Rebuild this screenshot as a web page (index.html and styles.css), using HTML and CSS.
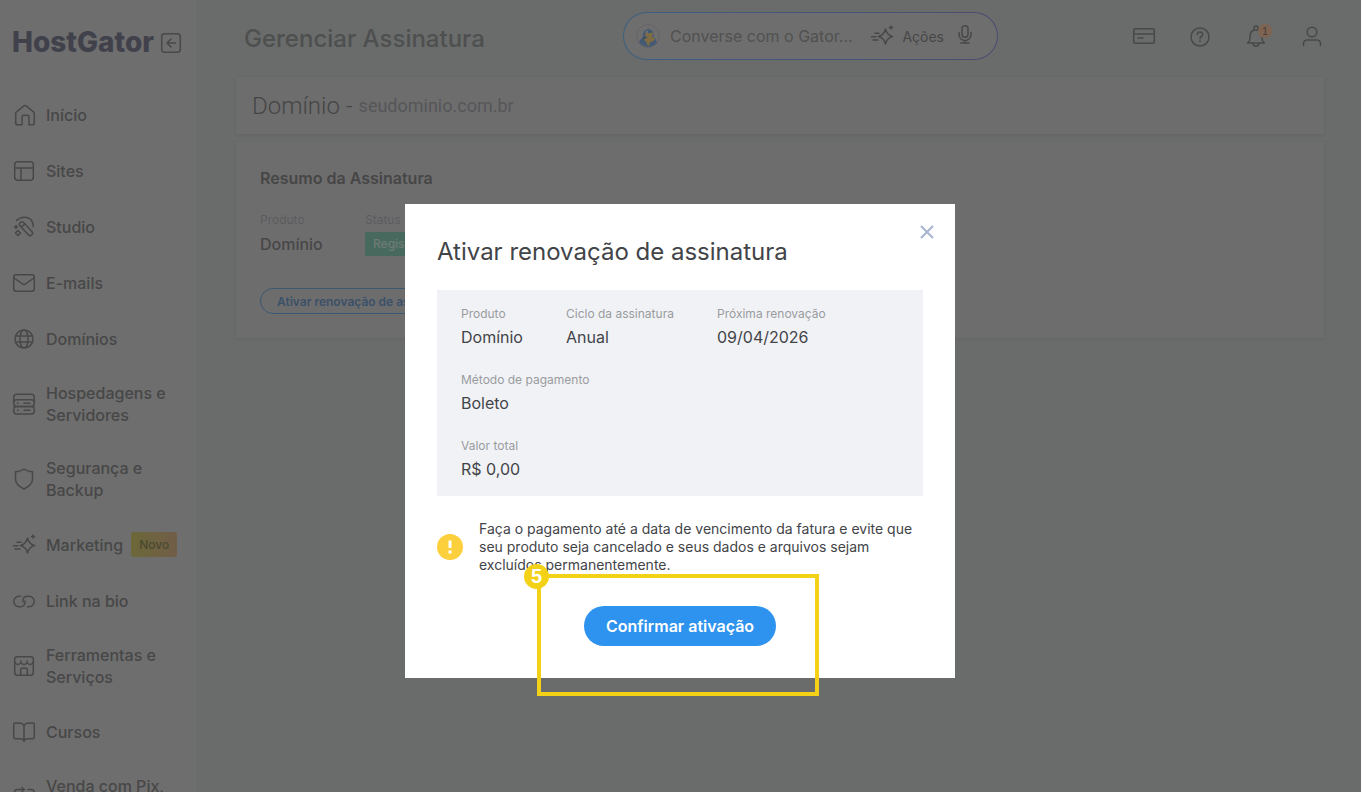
FILE: index.html
```html
<!DOCTYPE html>
<html lang="pt-BR">
<head>
  <meta charset="UTF-8">
  <meta name="viewport" content="width=device-width, initial-scale=1">
  <title>Gerenciar Assinatura - HostGator</title>
  <link rel="stylesheet" href="styles.css">
</head>
<body>
  <div class="app">
    <aside class="sidebar">
      <div class="brand">
        <span class="logo">HostGator</span>
        <button class="icon-btn" type="button" aria-label="Recolher menu">
          <svg class="icon" viewBox="0 0 24 24"><rect x="2.700" y="3.700" width="18.600" height="18.600" rx="3"/><path d="M16.500 13h-8M12 9l-4 4 4 4"/></svg>
        </button>
      </div>
      <nav class="menu">
        <a href="#">
          <svg class="icon" viewBox="0 0 24 24"><path d="M3.700 10.500Q3.700 9.500 4.500 8.800L11.600 3.100Q13 2.100 14.400 3.100L21.500 8.800Q22.300 9.500 22.300 10.500V20Q22.300 21.800 20.500 21.800H17V14Q17 12.300 15.300 12.300H11.700Q10 12.300 10 14V21.800H5.500Q3.700 21.800 3.700 20Z"/></svg>
          <span>Início</span>
        </a>
        <a href="#">
          <svg class="icon" viewBox="0 0 24 24"><rect x="2.700" y="2.700" width="18.600" height="18.600" rx="3"/><path d="M2.700 9h18.600M9 9v12.300"/></svg>
          <span>Sites</span>
        </a>
        <a href="#">
          <svg class="icon" viewBox="0 0 24 24"><path d="M4.500 5.500C10 0 21 1 21.300 11.500"/><rect x="11.600" y="5.200" width="4.800" height="17" rx="2.400" transform="rotate(-43 14 13.700)"/><path d="M9.500 12l3-2.800M6 15.500l2.500 2.500L6 20.500 3.500 18zM4 10.500v3M2.500 12h3"/></svg>
          <span>Studio</span>
        </a>
        <a href="#">
          <svg class="icon" viewBox="0 0 24 24"><rect x="1.700" y="3.700" width="20.600" height="16.600" rx="2.500"/><path d="M2 7l8.800 6.200q1.200.8 2.400 0L22 7"/></svg>
          <span>E-mails</span>
        </a>
        <a href="#">
          <svg class="icon" viewBox="0 0 24 24"><circle cx="12" cy="12" r="9"/><ellipse cx="12" cy="12" rx="4" ry="9"/><path d="M3.500 9h17M3.500 15h17"/></svg>
          <span>Domínios</span>
        </a>
        <a href="#">
          <svg class="icon" viewBox="0 0 24 24"><path d="M1.700 10V5.500Q1.700 2.300 5 2.300h14q3.300 0 3.300 3.200V10"/><rect x="1.700" y="7.700" width="20.600" height="6.800" rx="3"/><rect x="1.700" y="14.500" width="20.600" height="7.500" rx="3"/><path d="M5.500 11.200h.8M12 11.200h6M5.500 18.200h.8M12 18.200h6"/></svg>
          <span>Hospedagens e Servidores</span>
        </a>
        <a href="#">
          <svg class="icon" viewBox="0 0 24 24"><path d="M12 2q4 2.700 8.500 2.800V12q0 6-8.500 10Q3.500 18 3.500 12V4.800Q8 4.700 12 2z"/></svg>
          <span>Segurança e Backup</span>
        </a>
        <a href="#">
          <svg class="icon" viewBox="0 0 24 24"><path d="M15.500 5q1.200 5.800 7 7.500-5.800 1.700-7 7.500-1.200-5.800-7-7.500 5.800-1.700 7-7.500zM5 9.300h4M1.500 12.700H6M3 16h5"/><path d="M21 2v3M19.500 3.500h3"/></svg>
          <span>Marketing</span>
          <span class="tag-new">Novo</span>
        </a>
        <a href="#">
          <svg class="icon" viewBox="0 0 24 24"><path d="M8.500 7.300H7a5.200 5.200 0 0 0 0 10.400h1.500c3 0 4.500-2.200 4.500-4.700v-1M15.500 17.700H17a5.200 5.200 0 0 0 0-10.400h-1.500c-3 0-4.500 2.200-4.500 4.700v1"/></svg>
          <span>Link na bio</span>
        </a>
        <a href="#">
          <svg class="icon" viewBox="0 0 24 24"><rect x="2.700" y="2.700" width="18.600" height="18.600" rx="2.500"/><path d="M2.700 8.500q1.200 2 3.200 2t3-2V7v1.500q1.100 2 3.100 2t3.100-2V7v1.500q1 2 3 2t3.200-2M8.700 21v-5.500q0-1.300 1.300-1.300h4q1.300 0 1.300 1.300V21"/></svg>
          <span>Ferramentas e Serviços</span>
        </a>
        <a href="#">
          <svg class="icon" viewBox="0 0 24 24"><path d="M12 5.500q-1.500-2.500-4.500-2.500H3.200q-1.500 0-1.500 1.500v12.700q0 1.500 1.500 1.500h5.300q2.500 0 3.500 2.600 1-2.600 3.500-2.600h5.300q1.500 0 1.500-1.500V4.500q0-1.500-1.500-1.500h-4.300q-3 0-4.500 2.500zv15"/></svg>
          <span>Cursos</span>
        </a>
        <a href="#">
          <svg class="icon" viewBox="0 0 24 24"><path d="M2.500 7q0-2.500 3-2.500H12M10 2.500l2.500 2-2.500 2M16 4.500h3.500q2.500 0 2.500 2.500v10M2.500 7v10q0 2.500 3 2.500H17"/></svg>
          <span>Venda com Pix, Boleto</span>
        </a>
      </nav>
    </aside>

    <main class="main">
      <header class="topbar">
        <h1>Gerenciar Assinatura</h1>
        <div class="chat">
          <svg class="gator" viewBox="0 0 24 24" aria-hidden="true">
            <circle cx="12" cy="12" r="11.500" fill="none" stroke="#656568"/>
            <path fill="#445a73" d="M7.500 8.500Q8 6 10.500 6.200 12 3.600 14 5.700q3 .2 3 3.300 1.500 2 .5 4 3 2 3.500 5.500Q18 22.500 12 23q-5.500-.5-9-4.500 1-4 4.500-5.500-1.500-2 0-4.500z"/>
            <path fill="#806c43" d="M9 9q1.500-1 3.500.5 2.500-1.500 5 0L16 12.500l3 2.500-2 2.500-3 .5q0 3-2 4l-2-4.500Q8 16.500 8 14.500q2.500.5 3.500-1Q9 12 9 9z"/>
            <circle cx="11" cy="8" r="1" fill="#747779"/>
            <path fill="#3a4149" d="M7 13h2v1.500H7z"/>
          </svg>
          <input type="text" aria-label="Converse com o Gator" placeholder="Converse com o Gator...">
          <button class="actions-btn" type="button">
            <svg class="icon" viewBox="0 0 24 24"><path d="M15.500 5q1.200 5.800 7 7.500-5.800 1.700-7 7.500-1.200-5.800-7-7.500 5.800-1.700 7-7.500zM5 9.300h4M1.500 12.700H6M3 16h5"/><path d="M21 2v3M19.500 3.500h3"/></svg>
            Ações
          </button>
          <button class="icon-btn" type="button" aria-label="Falar">
            <svg class="icon" viewBox="0 0 24 24"><rect x="9" y="1.700" width="6" height="11.500" rx="3"/><path d="M6 8.500V10.500a6 6 0 0 0 12 0V8.500M12 16.500V19M8 19h8"/></svg>
          </button>
        </div>
        <div class="shortcuts">
          <button class="icon-btn" type="button" aria-label="Pagamentos">
            <svg class="icon" viewBox="0 0 24 24"><rect x="1.700" y="4.700" width="20.600" height="14.600" rx="2"/><path d="M1.700 10h20.600M6 14h5"/></svg>
          </button>
          <button class="icon-btn" type="button" aria-label="Ajuda">
            <svg class="icon" viewBox="0 0 24 24"><circle cx="12" cy="13" r="9"/><path d="M9.300 10.500Q9.500 8 12 8t2.700 2.300q0 1.500-1.400 2.200-1.300.7-1.300 2.300M12 17v.8"/></svg>
          </button>
          <button class="icon-btn" type="button" aria-label="Notificações">
            <svg class="icon" viewBox="0 0 24 24"><path d="M10 6V4Q10 2 12 2t2 2v2M3.500 19Q6.200 17.500 6.200 11.500 6.200 6 12 6T17.800 11.500q0 6 2.700 7.500zM9 19.500q.5 2.700 3 2.700t3-2.700"/></svg>
            <span class="count">1</span>
          </button>
          <button class="icon-btn" type="button" aria-label="Minha conta">
            <svg class="icon" viewBox="0 0 24 24"><circle cx="12" cy="8" r="4.800"/><path d="M3.500 21.500v-1.500q0-4 4-4h9q4 0 4 4v1.500"/></svg>
          </button>
        </div>
      </header>

      <section class="card card-domain">
        <h2>Domínio - <small>seudominio.com.br</small></h2>
      </section>

      <section class="card card-summary">
        <h3>Resumo da Assinatura</h3>
        <dl class="summary">
          <div>
            <dt>Produto</dt>
            <dd>Domínio</dd>
          </div>
          <div>
            <dt>Status</dt>
            <dd><span class="status">Registrado</span></dd>
          </div>
        </dl>
        <button class="btn-outline" type="button">Ativar renovação de assinatura</button>
      </section>
    </main>
  </div>

  <div class="overlay">
    <div class="modal" role="dialog" aria-modal="true" aria-labelledby="modal-title">
      <button class="close" type="button" aria-label="Fechar">
        <svg viewBox="0 0 14 14"><path d="M1 1l12 12M13 1L1 13"/></svg>
      </button>
      <h2 id="modal-title">Ativar renovação de assinatura</h2>
      <dl class="details">
        <div>
          <dt>Produto</dt>
          <dd>Domínio</dd>
        </div>
        <div>
          <dt>Ciclo da assinatura</dt>
          <dd>Anual</dd>
        </div>
        <div>
          <dt>Próxima renovação</dt>
          <dd>09/04/2026</dd>
        </div>
        <div class="wide">
          <dt>Método de pagamento</dt>
          <dd>Boleto</dd>
        </div>
        <div class="wide">
          <dt>Valor total</dt>
          <dd>R$ 0,00</dd>
        </div>
      </dl>
      <div class="warning">
        <svg viewBox="0 0 26 26" aria-hidden="true"><circle cx="13" cy="13" r="13" fill="#fccf3d"/><path d="M11.500 6.500h3V14h-3zM11.500 16.500h3v3h-3z" fill="#fff"/></svg>
        <p>Faça o pagamento até a data de vencimento da fatura e evite que seu produto seja cancelado e seus dados e arquivos sejam excluídos permanentemente.</p>
      </div>
      <div class="confirm">
        <button class="btn-primary" type="button">Confirmar ativação</button>
        <div class="step"><span>5</span></div>
      </div>
    </div>
  </div>
</body>
</html>
```

FILE: styles.css
```css
* { box-sizing: border-box; }
body { margin: 0; background: #696c6b; color: #474747; font-family: Inter, "Open Sans", sans-serif; font-size: 16px; }
h1, h2, h3, p, dl, dd { margin: 0; }
button, input { font: inherit; color: inherit; background: none; border: 0; padding: 0; }
button { cursor: pointer; }
.icon { display: block; flex: none; width: 24px; height: 24px; fill: none; stroke: #484848; stroke-width: 1.5; stroke-linecap: round; stroke-linejoin: round; }
.icon-btn { position: relative; }

.app { display: flex; height: 100vh; overflow: hidden; }

/* menu lateral */
.sidebar { flex: none; width: 196px; padding: 25px 12px 0; background: #6e6e6e; }
.brand { display: flex; align-items: center; gap: 8px; height: 34px; }
.logo { width: 139px; font-size: 28px; font-weight: 800; line-height: 34px; color: #41414c; }
.menu { display: flex; flex-direction: column; gap: 31px; margin-top: 43px; }
.menu a { display: flex; align-items: center; gap: 10px; min-height: 25px; color: #474747; font-weight: 500; line-height: 22px; text-decoration: none; }
.tag-new { margin-left: -2px; padding: 0 8px; border-radius: 3px; background: linear-gradient(90deg, #6c6839, #715d48); color: #4a4830; font-size: 12px; line-height: 25px; }

.main { flex: 1; padding: 0 37px 0 40px; }
.topbar { display: grid; grid-template-columns: 379px 375px 1fr; align-items: center; height: 72px; padding-left: 8px; margin-bottom: 5px; }
.topbar h1 { padding-top: 6px; color: #4e4f4f; font-size: 24px; font-weight: 500; line-height: 32px; }
.chat { display: flex; align-items: center; height: 48px; padding: 0 20px 0 12px; border: 1px solid transparent; border-radius: 24px; background: linear-gradient(#6e6e6e, #6e6e6e) padding-box, linear-gradient(90deg, #3d5f80, #4c4b70) border-box; }
.gator { flex: none; width: 24px; height: 24px; }
.chat input { flex: 1; min-width: 0; margin-left: 10px; outline: 0; }
.chat input::placeholder { color: #515151; opacity: 1; }
.actions-btn { display: flex; align-items: center; gap: 8px; margin-right: 9px; font-size: 14px; }
.shortcuts { display: flex; justify-content: flex-end; gap: 32px; }
.count { position: absolute; top: 0; right: -4px; width: 14px; height: 14px; border-radius: 50%; background: #806452; color: #43403d; font: 11px/14px "Liberation Sans", sans-serif; }

.card { background: #6e6d6e; box-shadow: 0 1px 4px rgba(0, 0, 0, .07); }
.card-domain { padding: 13px 16px 12px; }
.card-domain h2 { display: flex; align-items: center; gap: 6px; color: #454545; font-family: Roboto, sans-serif; font-size: 24px; font-weight: 300; line-height: 32px; }
.card-domain small { color: #555658; font-size: 18px; font-weight: 400; }
.card-summary { margin-top: 8px; padding: 24px; }
.card-summary h3 { color: #464646; font-size: 16px; font-weight: 600; line-height: 24px; }
.summary { display: flex; gap: 40px; margin: 20px 0 30px; }
.summary div { min-width: 65px; }
.summary dt { color: #5b5c5e; font-size: 12px; line-height: 20px; }
.summary dd { font-weight: 500; line-height: 28px; }
.status { display: block; margin-top: 2px; padding: 0 8px; background: #486a5e; color: #6f7b76; font-size: 12px; font-weight: 500; line-height: 24px; }
.btn-outline { height: 26px; padding: 0 16px; border: 1px solid #3a5874; border-radius: 13px; color: #3a5068; font-size: 12px; font-weight: 600; }

/* modal */
.overlay { position: fixed; inset: 0; display: flex; justify-content: center; align-items: flex-start; padding: 204px 1px 0 0; }
.modal { position: relative; width: 550px; padding: 32px; background: #fff; color: #424448; }
.modal h2 { margin-bottom: 22px; font-size: 24px; font-weight: 400; line-height: 32px; }
.close { position: absolute; top: 21px; right: 21px; width: 14px; height: 14px; }
.close svg { display: block; fill: none; stroke: #a6b4d0; stroke-width: 2; }
.details { display: grid; grid-template-columns: 65px 111px 1fr; gap: 20px 40px; padding: 14px 24px; background: #f1f2f6; }
.details .wide { grid-column: 1 / -1; }
.details dt { color: #999c9e; font-size: 12px; line-height: 20px; white-space: nowrap; }
.details dd { line-height: 26px; }
.warning { display: flex; align-items: center; gap: 16px; margin: 24px 0 32px; }
.warning svg { flex: none; width: 26px; height: 26px; }
.warning p { font-size: 14px; line-height: 18px; }
.confirm { position: relative; display: flex; justify-content: center; }
.btn-primary { width: 192px; height: 40px; border-radius: 20px; background: #2e93ee; color: #fff; font-weight: 600; }
.step { position: absolute; top: -32px; right: 104px; bottom: -50px; left: 100px; border: 4px solid #f3d117; pointer-events: none; }
.step span { position: absolute; top: -14px; left: -17px; width: 25px; height: 25px; border-radius: 50%; background: #f3d117; color: #fff; font: bold 20px/25px "Liberation Sans", sans-serif; text-align: center; }
```
